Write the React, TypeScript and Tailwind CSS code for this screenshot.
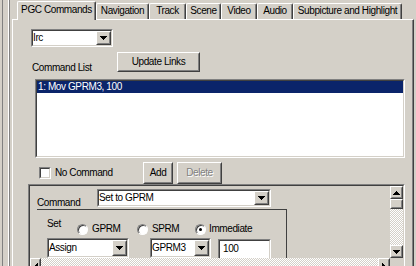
import type { ReactNode } from "react";

// classic win2k look: gray face, white highlight, #808080 / #404040 shadows
const FONT = "font-['Liberation_Sans',Arial,sans-serif] text-[10px] leading-[12px] tracking-[-0.4px]";
const CHECKER = "bg-[image:repeating-conic-gradient(#ffffff_0_25%,#d4d0c8_0_50%)] bg-[length:2px_2px]";

const tabs = [
    { label: "PGC Commands", w: "w-[79px]", active: true },
    { label: "Navigation", w: "w-[53px]" },
    { label: "Track", w: "w-[37px]" },
    { label: "Scene", w: "w-[35px]" },
    { label: "Video", w: "w-[36px]" },
    { label: "Audio", w: "w-[36px]" },
    { label: "Subpicture and Highlight", w: "w-[109px]" },
];

const Sunken = ({ className = "", inner = "bg-white", children }: { className?: string; inner?: string; children?: ReactNode }) => (
    <div className={`shrink-0 border border-[#808080] border-r-white border-b-white ${className}`}>
        <div className={`w-full h-full flex overflow-hidden border border-[#404040] border-r-[#d4d0c8] border-b-[#d4d0c8] ${inner}`}>
            {children}
        </div>
    </div>
);

const Raised = ({ className = "", children }: { className?: string; children?: ReactNode }) => (
    <div className={`shrink-0 bg-[#d4d0c8] border border-white border-r-[#404040] border-b-[#404040] ${className}`}>
        <div className="w-full h-full flex items-center justify-center border border-[#d4d0c8] border-r-[#808080] border-b-[#808080]">
            {children}
        </div>
    </div>
);

const ARROWS: Record<string, string> = {
    up: "M3 0h1v1H3zM2 1h3v1H2zM1 2h5v1H1zM0 3h7v1H0z",
    down: "M0 0h7v1H0zM1 1h5v1H1zM2 2h3v1H2zM3 3h1v1H3z",
    left: "M0 3h1v1H0zM1 2h1v3H1zM2 1h1v5H2zM3 0h1v7H3z",
    right: "M0 0h1v7H0zM1 1h1v5H1zM2 2h1v3H2zM3 3h1v1H3z",
};

const Arrow = ({ dir }: { dir: "up" | "down" | "left" | "right" }) => {
    const horiz = dir === "up" || dir === "down";
    return (
        <svg width={horiz ? 7 : 4} height={horiz ? 4 : 7} viewBox={horiz ? "0 0 7 4" : "0 0 4 7"} shapeRendering="crispEdges">
            <path d={ARROWS[dir]} fill="#000" />
        </svg>
    );
};

const Combo = ({ className = "", text }: { className?: string; text: string }) => (
    <Sunken className={className}>
        <span className="flex-1 whitespace-nowrap overflow-hidden self-center">{text}</span>
        <Raised className="w-[15px] h-full">
            <Arrow dir="down" />
        </Raised>
    </Sunken>
);

const Button = ({ className = "", disabled, children }: { className?: string; disabled?: boolean; children: ReactNode }) => (
    <Raised className={className}>
        <span className={disabled ? "text-[#808080] [text-shadow:1px_1px_0_#fff]" : ""}>{children}</span>
    </Raised>
);

const Radio = ({ checked }: { checked?: boolean }) => (
    <div className="w-[11px] h-[11px] shrink-0 rounded-full border border-[#808080] border-r-white border-b-white bg-white shadow-[inset_1px_1px_0_#404040] flex items-center justify-center">
        {checked && <div className="w-[3px] h-[3px] rounded-full bg-black" />}
    </div>
);

const App = () => {
    return (
        <div className={`w-[416px] h-[266px] overflow-hidden bg-[#d4d0c8] text-black flex ${FONT}`}>
            {/* left splitter lines */}
            <div className="flex h-full shrink-0">
                <div className="w-[2px]" />
                <div className="w-px bg-[#808080]" />
                <div className="w-[5px]" />
                <div className="w-px bg-white" />
                <div className="w-px bg-[#808080]" />
                <div className="w-[2px]" />
            </div>

            {/* tab control */}
            <div className="w-[402px] h-full flex flex-col shrink-0">
                <div className="flex items-end h-[19px] pl-[5px] shrink-0">
                    {tabs.map((t) => (
                        <div
                            key={t.label}
                            className={`${t.w} shrink-0 text-center whitespace-nowrap bg-[#d4d0c8] rounded-tl-[2px] rounded-tr-[2px] border-t border-l border-white border-r border-r-[#404040] shadow-[inset_-1px_0_0_#808080] ${
                                t.active ? "relative z-10 h-[19px] -mb-px pt-[2px]" : "h-[16px] pt-px"
                            }`}
                        >
                            {t.label}
                        </div>
                    ))}
                </div>

                <div className="flex-1 flex flex-col items-start border-l border-t border-white border-r border-r-[#404040] shadow-[inset_-1px_0_0_#808080]">
                    <Combo className="ml-[18px] mt-[9px] w-[82px] h-[18px]" text="Irc" />

                    <div className="flex items-end mt-[5px]">
                        <div className="ml-[19px] w-[85px] -mb-[2px] whitespace-nowrap">Command List</div>
                        <Button className="w-[83px] h-[20px]">Update Links</Button>
                    </div>

                    <Sunken className="ml-[22px] mt-[7px] w-[370px] h-[79px]" inner="bg-white flex-col">
                        <div className="h-[12px] shrink-0 bg-[#0a246a] text-white pl-px whitespace-nowrap">1: Mov GPRM3, 100</div>
                    </Sunken>

                    <div className="flex items-center mt-[4px] h-[22px]">
                        <Sunken className="ml-[26px] w-[12px] h-[12px]" />
                        <span className="ml-[4px] w-[88px] whitespace-nowrap">No Command</span>
                        <Button className="w-[30px] h-[22px]">Add</Button>
                        <Button className="ml-[4px] w-[45px] h-[22px]" disabled>
                            Delete
                        </Button>
                    </div>

                    {/* scrolling command editor */}
                    <Sunken className="ml-[15px] w-[377px] h-[100px]" inner="bg-[#d4d0c8] flex-col">
                        <div className="flex h-[72px] shrink-0">
                            <div className="w-[360px] h-full overflow-hidden flex flex-col items-start">
                                <div className="flex items-end mt-[3px]">
                                    <div className="ml-[7px] w-[60px] -mb-[2px]">Command</div>
                                    <Combo className="w-[174px] h-[18px]" text="Set to GPRM" />
                                </div>

                                <div className="ml-[7px] mt-[2px] w-[250px] h-[80px] shrink-0 border-t border-r border-[#404040] pl-[10px] flex flex-col items-start">
                                    <div className="flex items-start mt-[8px]">
                                        <div className="w-[30px]">Set</div>
                                        <div className="flex items-center mt-[5px] whitespace-nowrap">
                                            <Radio />
                                            <span className="ml-[4px] w-[45px]">GPRM</span>
                                            <Radio />
                                            <span className="ml-[4px] w-[43px]">SPRM</span>
                                            <Radio checked />
                                            <span className="ml-[3px]">Immediate</span>
                                        </div>
                                    </div>
                                    <div className="flex items-start mt-[3px]">
                                        <Combo className="w-[82px] h-[20px]" text="Assign" />
                                        <Combo className="ml-[21px] w-[61px] h-[20px]" text="GPRM3" />
                                        <Sunken className="ml-[7px] mt-px w-[53px] h-[22px]">
                                            <span className="pl-[3px] pt-[2px]">100</span>
                                        </Sunken>
                                    </div>
                                </div>
                            </div>

                            <div className="w-[13px] h-full flex flex-col">
                                <Raised className="w-full h-[13px]">
                                    <Arrow dir="up" />
                                </Raised>
                                <Raised className="w-full h-[10px]" />
                                <div className={`flex-1 ${CHECKER}`} />
                                <Raised className="w-full h-[13px]">
                                    <Arrow dir="down" />
                                </Raised>
                            </div>
                        </div>

                        <div className="flex h-[16px] shrink-0">
                            <Raised className="w-[11px] h-full">
                                <Arrow dir="left" />
                            </Raised>
                            <div className={`flex-1 ${CHECKER}`} />
                            <Raised className="w-[12px] h-full">
                                <Arrow dir="right" />
                            </Raised>
                            <div className="w-[13px] h-full" />
                        </div>
                    </Sunken>
                </div>
            </div>
        </div>
    );
};

export default App;
